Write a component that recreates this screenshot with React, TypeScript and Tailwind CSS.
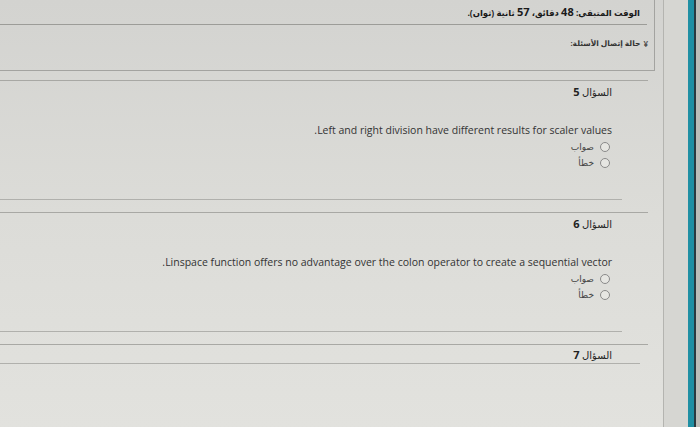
const font = { fontFamily: '"Open Sans", "DejaVu Sans", sans-serif' }

type Q = { n: number; text: string }

const questions: Q[] = [
  { n: 5, text: 'Left and right division have different results for scaler values.' },
  { n: 6, text: 'Linspace function offers no advantage over the colon operator to create a sequential vector.' },
]

function Radio({ label }: { label: string }) {
  return (
    <label className="flex items-center gap-[6px] h-[16px] text-[9px] text-[#444]">
      <span className="w-[10px] h-[10px] rounded-full border border-[#8a8a8a] bg-[#e6e6e2]" />
      <span>{label}</span>
    </label>
  )
}

function Heading({ n }: { n: number }) {
  return (
    <div className="text-[10px] text-[#222] leading-none">
      السؤال <span className="font-bold text-[11px]">{n}</span>
    </div>
  )
}

function Question({ q }: { q: Q }) {
  return (
    <div>
      <div className="border-t border-[#a8a8a4] mr-[15px]" />
      <div className="pr-[51px] pt-[5px] h-[118px]">
        <Heading n={q.n} />
        <p className="mt-[26px] text-[10.5px] text-[#333] leading-[14px]">{q.text}</p>
        <div className="mt-[2px] pr-[2px]">
          <Radio label="صواب" />
          <Radio label="خطأ" />
        </div>
      </div>
      <div className="border-t border-[#b0b0ac] mr-[41px]" />
      <div className="h-[12px]" />
    </div>
  )
}

export default function App() {
  return (
    <div className="w-[700px] h-[427px] overflow-hidden flex bg-[#d6d6d2]" style={font}>
      <div dir="rtl" className="w-[664px] h-full border-r border-[#b4b4b0] bg-gradient-to-b from-[#d3d3d0] via-[#dcdcd8] to-[#e2e2de]">
        <div className="mr-[8px] h-[71px] border-r border-b border-[#a3a3a0]">
          <div className="h-[25px] mr-[7px] flex items-center pr-[7px] border-b border-[#9c9c98] text-[8.5px] font-bold text-[#1a1a1a]">
            <span>
              الوقت المتبقي: <span className="text-[11px]">48</span> دقائق، <span className="text-[11px]">57</span> ثانية (ثوان).
            </span>
          </div>
          <div className="flex items-center gap-[3px] pr-[6px] pt-[13px] text-[7.5px] font-bold text-[#333]">
            <span className="text-[8px] text-[#555]">¥</span>
            <span>حالة إتصال الأسئلة:</span>
          </div>
        </div>
        <div className="h-[9px]" />
        {questions.map((q) => (
          <Question key={q.n} q={q} />
        ))}
        <div className="border-t border-[#a8a8a4] mr-[15px]" />
        <div className="pr-[51px] h-[18px] flex items-center">
          <Heading n={7} />
        </div>
        <div className="border-t border-[#b0b0ac] mr-[23px]" />
      </div>
      <div className="flex-1" />
      <div className="w-[6px] h-full bg-[#1f8fa3]" />
      <div className="w-[2px] h-full bg-[#2a3a40]" />
      <div className="w-[4px] h-full bg-[#bdbdb8]" />
    </div>
  )
}
